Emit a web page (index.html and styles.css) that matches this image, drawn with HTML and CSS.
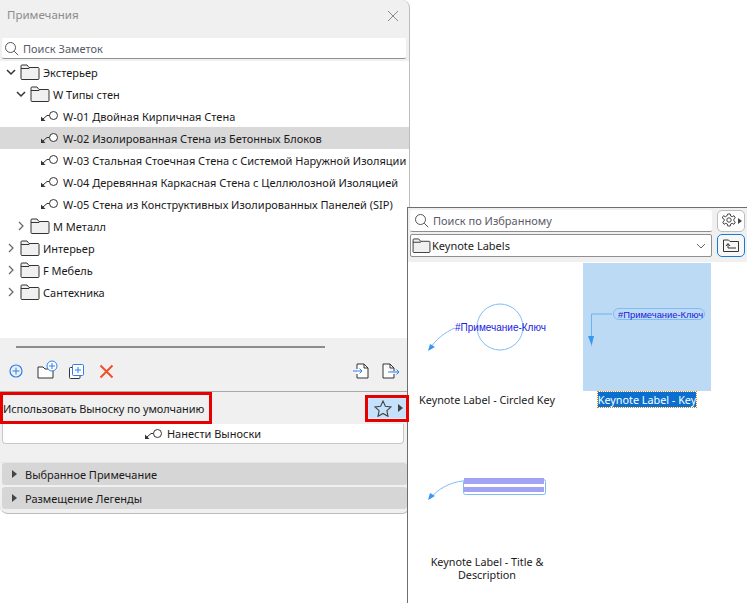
FILE: index.html
```html
<!DOCTYPE html>
<html lang="ru">
<head>
<meta charset="utf-8">
<title>Примечания</title>
<link rel="stylesheet" href="styles.css">
</head>
<body>
<svg class="defs" width="0" height="0">
  <defs>
    <symbol id="folder" viewBox="0 0 20 16"><path d="M1 14.500V2a1 1 0 0 1 1-1h5l2 2.500h9a1 1 0 0 1 1 1v10a1 1 0 0 1-1 1H2a1 1 0 0 1-1-1z" fill="#f0f0f0" stroke="#333" stroke-width="1"/><path d="M1 4.500h8l1-1" fill="none" stroke="#333"/></symbol>
    <symbol id="key" viewBox="0 0 18 10"><path d="M2 8l4-3.500h2.500" fill="none" stroke="#333"/><path d="M0 10V5.500L4.500 10z" fill="#333"/><circle cx="12.500" cy="4.500" r="4" fill="#fff" stroke="#333"/></symbol>
    <symbol id="chev-d" viewBox="0 0 10 10"><path d="M1 3l4 4 4-4" fill="none" stroke="#333" stroke-width="1.500"/></symbol>
    <symbol id="chev-r" viewBox="0 0 10 10"><path d="M3 1l4 4-4 4" fill="none" stroke="#666" stroke-width="1.200"/></symbol>
  </defs>
</svg>

<section class="panel">
  <header class="panel-title">
    <span>Примечания</span>
    <svg class="close" width="12" height="12" viewBox="0 0 12 12"><path d="M1 1l10 10M11 1L1 11" stroke="#8a8a8a" fill="none"/></svg>
  </header>
  <div class="search panel-search">
    <svg width="15" height="15" viewBox="0 0 15 15"><circle cx="6.500" cy="6.500" r="5" fill="none" stroke="#555"/><path d="M10.200 10.200l4 4" stroke="#555"/></svg>
    <span>Поиск Заметок</span>
  </div>
  <ul class="tree">
    <li class="row lvl0"><svg class="tw"><use href="#chev-d"/></svg><svg class="fd"><use href="#folder"/></svg><span>Экстерьер</span></li>
    <li class="row lvl1"><svg class="tw"><use href="#chev-d"/></svg><svg class="fd"><use href="#folder"/></svg><span>W Типы стен</span></li>
    <li class="row lvl2"><svg class="ky"><use href="#key"/></svg><span>W-01 Двойная Кирпичная Стена</span></li>
    <li class="row lvl2 selected"><svg class="ky"><use href="#key"/></svg><span>W-02 Изолированная Стена из Бетонных Блоков</span></li>
    <li class="row lvl2"><svg class="ky"><use href="#key"/></svg><span>W-03 Стальная Стоечная Стена с Системой Наружной Изоляции</span></li>
    <li class="row lvl2"><svg class="ky"><use href="#key"/></svg><span>W-04 Деревянная Каркасная Стена с Целлюлозной Изоляцией</span></li>
    <li class="row lvl2"><svg class="ky"><use href="#key"/></svg><span>W-05 Стена из Конструктивных Изолированных Панелей (SIP)</span></li>
    <li class="row lvl1"><svg class="tw"><use href="#chev-r"/></svg><svg class="fd"><use href="#folder"/></svg><span>M Металл</span></li>
    <li class="row lvl0"><svg class="tw"><use href="#chev-r"/></svg><svg class="fd"><use href="#folder"/></svg><span>Интерьер</span></li>
    <li class="row lvl0"><svg class="tw"><use href="#chev-r"/></svg><svg class="fd"><use href="#folder"/></svg><span>F Мебель</span></li>
    <li class="row lvl0"><svg class="tw"><use href="#chev-r"/></svg><svg class="fd"><use href="#folder"/></svg><span>Сантехника</span></li>
  </ul>
  <div class="toolbar">
    <div class="scrollbar"></div>
    <div class="tools">
      <svg width="16" height="16" viewBox="0 0 16 16"><circle cx="8" cy="8" r="6" fill="none" stroke="#2f80ed" stroke-width="1.200"/><path d="M8 4.500v7M4.500 8h7" stroke="#2f80ed"/></svg>
      <svg class="t-gap1" width="22" height="20" viewBox="0 0 22 20"><path d="M1 18V7h5l2 2h8v9z" fill="#fff" stroke="#333"/><circle cx="15" cy="6" r="5" fill="#fff" stroke="#2f80ed"/><path d="M15 3v6M12 6h6" stroke="#2f80ed"/></svg>
      <svg class="t-gap2" width="15" height="15" viewBox="0 0 15 15"><rect x=".5" y="3.500" width="10.500" height="11" rx="1" fill="#fff" stroke="#333"/><rect x="3.500" y=".5" width="11" height="11" rx="1" fill="#fff" stroke="#2f80ed"/><path d="M9 3v6M6 6h6" stroke="#2f80ed"/></svg>
      <svg class="t-gap3" width="15" height="15" viewBox="0 0 15 15"><path d="M1.500 1.500l12 12M13.500 1.500l-12 12" stroke="#f0502a" stroke-width="2"/></svg>
      <span class="tools-spacer"></span>
      <svg width="16" height="16" viewBox="0 0 16 16"><path d="M4 6V1h7l4 4v10H4v-4" fill="#fff" stroke="#333"/><path d="M11 1v4h4" fill="none" stroke="#333"/><path d="M0 8h9M6.500 5.500L9 8l-2.500 2.500" fill="none" stroke="#2f80ed"/></svg>
      <svg class="t-gap4" width="18" height="16" viewBox="0 0 18 16"><path d="M1 1h7l4 4v3M12 11v4H1V1" fill="#fff" stroke="#333"/><path d="M8 1v4h4" fill="none" stroke="#333"/><path d="M6 9h11M14.500 6.500L17 9l-2.500 2.500" fill="none" stroke="#2f80ed"/></svg>
    </div>
  </div>
  <div class="default-row">
    <span class="default-label">Использовать Выноску по умолчанию</span>
    <div class="star-btn">
      <svg width="18" height="17" viewBox="0 0 18 17"><path d="M9 1l2.400 5.200 5.600.7-4.100 3.800 1.100 5.600L9 13.500 4 16.300l1.100-5.600L1 6.900l5.600-.7z" fill="none" stroke="#444" stroke-width="1.100"/></svg>
      <i class="tri"></i>
    </div>
  </div>
  <div class="apply-wrap">
    <button class="apply"><svg class="ky"><use href="#key"/></svg>Нанести Выноски</button>
  </div>
  <div class="sections">
    <div class="section"><i class="tri"></i>Выбранное Примечание</div>
    <div class="section"><i class="tri"></i>Размещение Легенды</div>
  </div>
  <div class="mark mark-label"></div>
  <div class="mark mark-star"></div>
</section>

<section class="popup">
  <div class="popup-head">
    <div class="popup-line">
      <div class="search popup-search">
        <svg width="15" height="15" viewBox="0 0 15 15"><circle cx="6.500" cy="6.500" r="5" fill="none" stroke="#555"/><path d="M10.200 10.200l4 4" stroke="#555"/></svg>
        <span>Поиск по Избранному</span>
      </div>
      <div class="gear-btn">
        <svg width="16" height="16" viewBox="0 0 16 16"><path d="M6.700 1h2.600l.4 2 1.500.7 1.800-1 1.300 2.200-1.500 1.300v1.600l1.500 1.300-1.300 2.200-1.800-1-1.500.7-.4 2H6.700l-.4-2-1.500-.7-1.800 1-1.300-2.200 1.500-1.300V6.200L1.200 4.900 2.500 2.700l1.800 1 1.500-.7z" fill="#fff" stroke="#333" stroke-width=".9"/><circle cx="8" cy="7" r="2.200" fill="none" stroke="#333" stroke-width=".9"/></svg>
        <i class="tri small"></i>
      </div>
    </div>
    <div class="popup-line">
      <div class="select">
        <svg class="select-folder"><use href="#folder"/></svg>
        <span>Keynote Labels</span>
        <svg class="select-chev" width="10" height="6" viewBox="0 0 10 6"><path d="M1 1l4 4 4-4" fill="none" stroke="#666"/></svg>
      </div>
      <div class="up-btn">
        <svg width="16" height="13" viewBox="0 0 16 13"><path d="M.5 12.500V1h5L7 2.500h8.500v10z" fill="none" stroke="#333"/><path d="M13 9H5V5M3 7l2-2.500L7 7" fill="none" stroke="#333"/></svg>
      </div>
    </div>
  </div>
  <div class="gallery">
    <figure class="item">
      <svg class="thumb" width="128" height="128" viewBox="0 0 128 128">
        <circle cx="77" cy="64" r="23" fill="none" stroke="#7dbdf7"/>
        <path d="M32 65C22 69 12 77 6 87" fill="none" stroke="#7dbdf7"/>
        <path d="M5 88l2-7 5 3z" fill="#3a97f0"/>
        <text class="thumb-text" x="32" y="68">#Примечание-Ключ</text>
      </svg>
      <figcaption>Keynote Label - Circled Key</figcaption>
    </figure>
    <figure class="item">
      <svg class="thumb selected-thumb" width="128" height="128" viewBox="0 0 128 128">
        <path d="M29 51H8.500v32" fill="none" stroke="#6cb2f6"/>
        <path d="M5 73h6l-2 8H8z" fill="#3a97f0"/>
        <rect x="30.500" y="45.500" width="91" height="11" rx="5.500" fill="none" stroke="#7dbdf7"/>
        <text class="thumb-text small-text" x="35" y="55">#Примечание-Ключ</text>
      </svg>
      <figcaption><span class="selected-label">Keynote Label - Key</span></figcaption>
    </figure>
    <figure class="item">
      <svg class="thumb" width="128" height="128" viewBox="0 0 128 128">
        <path d="M40 56C28 57 14 64 7 74" fill="none" stroke="#7dbdf7"/>
        <path d="M5 75l2-7 5 3z" fill="#3a97f0"/>
        <rect x="40.500" y="54.500" width="82" height="15" rx="2" fill="none" stroke="#7dbdf7"/>
        <rect x="41" y="53" width="80" height="6" fill="#a3a3f5"/>
        <rect x="41" y="62" width="80" height="5" fill="#a3a3f5"/>
      </svg>
      <figcaption>Keynote Label - Title &amp; Description</figcaption>
    </figure>
  </div>
</section>
</body>
</html>
```
FILE: styles.css
```css
* { box-sizing: border-box; }
html, body { margin: 0; height: 100%; }
body {
  position: relative;
  width: 747px;
  height: 603px;
  overflow: hidden;
  background: #fff;
  font-family: "Noto Sans", sans-serif;
  font-size: 11px;
  color: #1a1a1a;
}
.defs { position: absolute; }
svg { display: block; flex: none; }

.panel {
  position: absolute;
  left: 0;
  top: 0;
  width: 410px;
  height: 514px;
  background: #f0f0f0;
  border-right: 1px solid #bdbdbd;
  border-bottom: 1px solid #bdbdbd;
  border-radius: 0 8px 8px 8px;
  display: flex;
  flex-direction: column;
}
.panel-title {
  height: 38px;
  padding: 7px 10px 0 7px;
  display: flex;
  justify-content: space-between;
  align-items: flex-start;
  font-size: 11.5px;
  color: #8c8c8c;
}
.close { margin-top: 3px; }

.search {
  display: flex;
  align-items: center;
  gap: 4px;
  background: #fff;
  border-bottom: 1px solid #8f8f8f;
  border-radius: 2px;
  color: #5a5a6a;
}
.panel-search {
  height: 21px;
  margin: 0 3px 0 2px;
  padding-left: 2px;
}
.tree {
  list-style: none;
  margin: 2px 0 0;
  padding: 0;
  height: 277px;
  background: #fff;
  overflow: hidden;
}
.row {
  height: 22px;
  display: flex;
  align-items: center;
  white-space: nowrap;
  overflow: hidden;
}
.row.selected { background: #d9d9d9; }
.lvl0 { padding-left: 6px; }
.lvl1 { padding-left: 16px; }
.lvl2 { padding-left: 41px; }
.tw { width: 10px; height: 10px; margin-right: 4px; }
.fd { width: 20px; height: 16px; margin-right: 3px; }
.ky { width: 18px; height: 10px; margin-right: 4px; }

.toolbar {
  height: 54px;
  padding: 8px 9px 0 8px;
  border-bottom: 1px solid #a9a9a9;
}
.scrollbar {
  height: 2px;
  margin: 0 0 0 8px;
  width: 309px;
  background: #8c8c8c;
}
.tools {
  display: flex;
  align-items: center;
  height: 26px;
  margin-top: 10px;
}
.t-gap1 { margin-left: 13px; margin-top: -3px; }
.t-gap2 { margin-left: 10px; }
.t-gap3 { margin-left: 15px; }
.t-gap4 { margin-left: 13px; }
.tools-spacer { flex: 1; }

.default-row {
  height: 32px;
  display: flex;
  align-items: center;
  justify-content: space-between;
  padding-left: 3px;
  padding-right: 3px;
}
.default-label { letter-spacing: -0.09px; }
.star-btn {
  width: 38px;
  height: 20px;
  background: #c5e1fb;
  border-radius: 2px;
  display: flex;
  align-items: center;
  padding-left: 6px;
  gap: 6px;
}
.tri {
  display: block;
  width: 0;
  height: 0;
  border-left: 5px solid #444;
  border-top: 4px solid transparent;
  border-bottom: 4px solid transparent;
  flex: none;
}
.apply-wrap {
  padding: 0 5px 0 2px;
  height: 39px;
  border-bottom: 1px solid #e6e6e6;
}
.apply {
  display: flex;
  align-items: center;
  justify-content: center;
  width: 100%;
  height: 20px;
  margin: 0;
  padding: 0;
  background: #fff;
  border: 1px solid #c8c8c8;
  border-top: 0;
  border-radius: 0 0 4px 4px;
  font: inherit;
  color: inherit;
}
.apply .ky { margin-right: 4px; }
.sections {
  display: flex;
  flex-direction: column;
  gap: 2px;
  padding: 0 2px;
}
.section {
  height: 22px;
  background: #d6d6d6;
  border-radius: 3px;
  display: flex;
  align-items: center;
  gap: 8px;
  padding-left: 10px;
}
.mark {
  position: absolute;
  border: 3px solid #e60000;
  z-index: 2;
}
.mark-label { left: 0; top: 392px; width: 212px; height: 32px; }
.mark-star { left: 365px; top: 395px; width: 44px; height: 27px; }

.popup {
  position: absolute;
  z-index: 1;
  left: 407px;
  top: 207px;
  width: 340px;
  height: 396px;
  background: #fff;
  border-left: 1px solid #6e6e6e;
  border-top: 1px solid #6e6e6e;
}
.popup-head {
  height: 54px;
  background: #f0f0f0;
  padding: 2px 2px 0 2px;
  display: flex;
  flex-direction: column;
  gap: 2px;
}
.popup-line {
  display: flex;
  gap: 4px;
  align-items: stretch;
}
.popup-search {
  width: 303px;
  height: 22px;
  padding-left: 4px;
}
.gear-btn, .up-btn {
  width: 28px;
  height: 22px;
  margin-left: 1px;
  background: #fff;
  border-radius: 5px;
  border: 1px solid #bdbdbd;
  display: flex;
  align-items: center;
  justify-content: center;
  gap: 1px;
}
.up-btn { border-color: #1a78d6; height: 23px; background: #f7f7f7; }
.tri.small { border-left-width: 4px; border-top-width: 3px; border-bottom-width: 3px; }
.select {
  width: 304px;
  height: 23px;
  background: #fff;
  border: 1px solid #8f8f8f;
  border-radius: 2px;
  display: flex;
  align-items: center;
  padding: 0 5px 0 1px;
}
.select-folder { width: 19px; height: 15px; margin-right: 1px; }
.select-chev { margin-left: auto; }

.gallery {
  display: grid;
  grid-template-columns: 160px 160px;
  grid-auto-rows: 162px;
  padding: 1px 0 0 15px;
}
.item {
  margin: 0;
  width: 128px;
  display: flex;
  flex-direction: column;
  align-items: center;
}
.thumb-text {
  font-family: "Liberation Sans", sans-serif;
  font-size: 10px;
  fill: #2020e0;
}
.thumb-text.small-text { font-size: 9.400px; }
.selected-thumb { background: #bcdaf3; }
figcaption {
  width: 150px;
  margin-top: 2px;
  text-align: center;
  line-height: 13px;
  font-size: 10.800px;
}
.selected-label {
  background: #0a6fcf;
  color: #fff;
  outline: 1px dotted #d08a20;
}
```
